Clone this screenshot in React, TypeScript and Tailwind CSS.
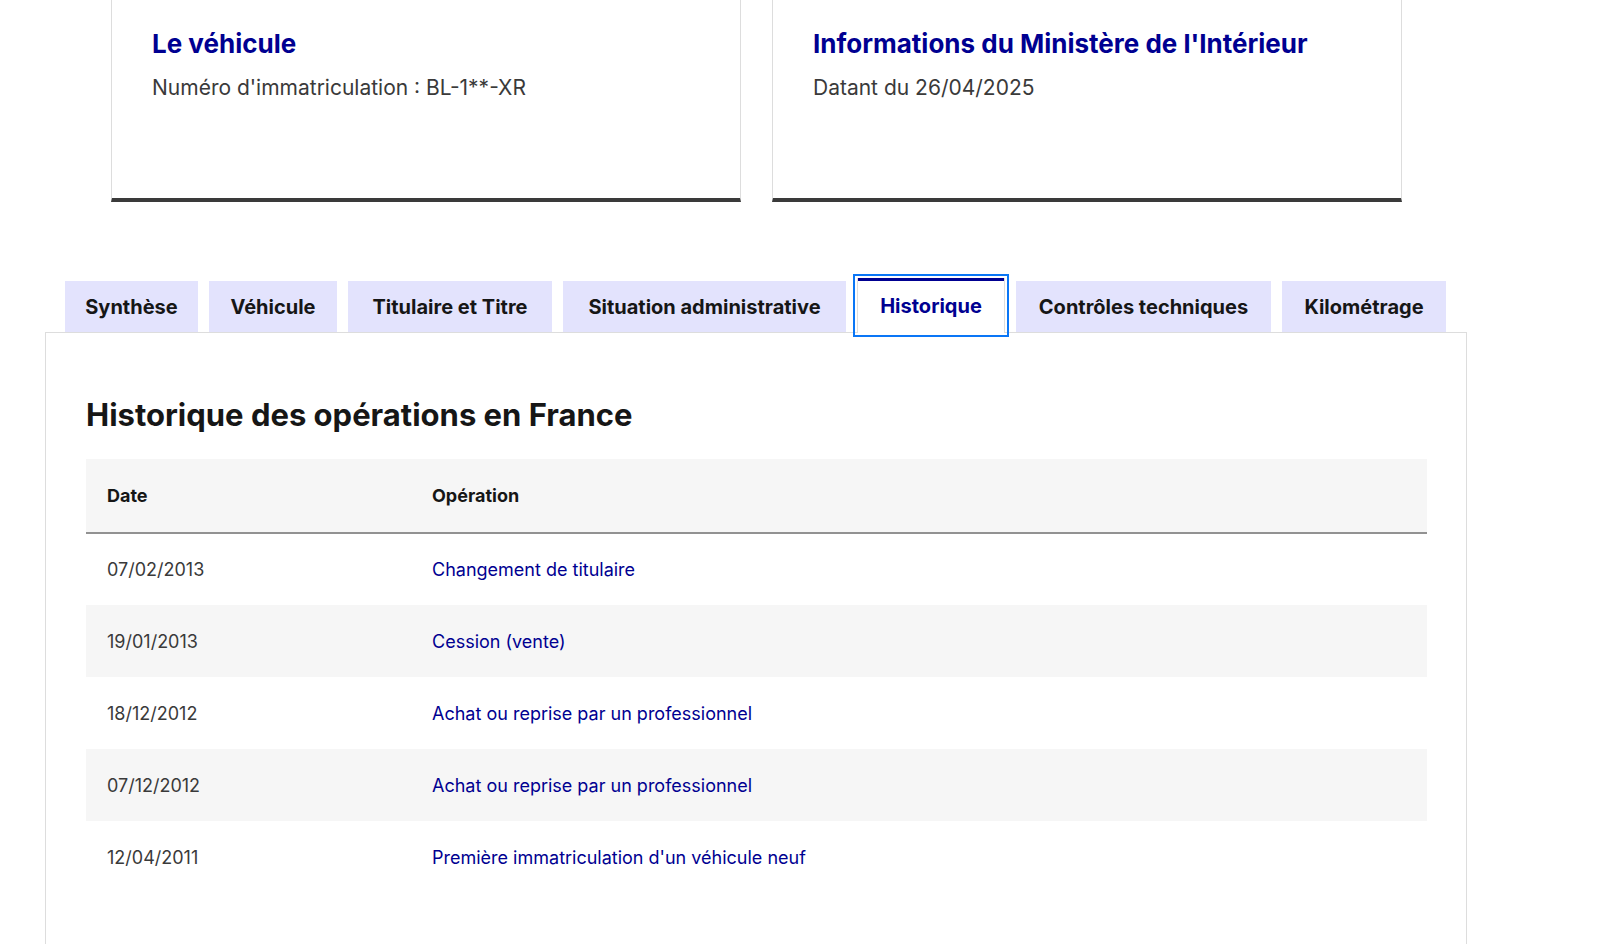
import React from 'react';

const tabs = [
  { label: 'Synthèse', width: 'w-[133px]' },
  { label: 'Véhicule', width: 'w-[128px]' },
  { label: 'Titulaire et Titre', width: 'w-[204px]' },
  { label: 'Situation administrative', width: 'w-[283px]' },
  { label: 'Historique', width: 'w-[148px]' },
  { label: 'Contrôles techniques', width: 'w-[255px]' },
  { label: 'Kilométrage', width: 'w-[164px]' },
];

const operations = [
  { date: '07/02/2013', label: 'Changement de titulaire' },
  { date: '19/01/2013', label: 'Cession (vente)' },
  { date: '18/12/2012', label: 'Achat ou reprise par un professionnel' },
  { date: '07/12/2012', label: 'Achat ou reprise par un professionnel' },
  { date: '12/04/2011', label: "Première immatriculation d'un véhicule neuf" },
];

const Card = ({ title, text }: { title: string; text: string }) => (
  <div className="w-[630px] h-[202px] border-x border-[#dddddd] border-b-4 border-b-[#3a3a3a] pl-[40px] pt-[26px]">
    <h2 className="text-[26px] leading-[36px] font-bold text-[#000091]">{title}</h2>
    <p className="mt-[11px] text-[21px] leading-[30px] text-[#3a3a3a]">{text}</p>
  </div>
);

const App = () => {
  return (
    <div className="min-h-screen bg-white font-['Inter',sans-serif] text-[#161616] overflow-hidden">
      <div className="flex gap-[31px] ml-[111px]">
        <Card title="Le véhicule" text="Numéro d'immatriculation : BL-1**-XR" />
        <Card title="Informations du Ministère de l'Intérieur" text="Datant du 26/04/2025" />
      </div>

      <div className="ml-[45px] w-[1422px] mt-[79px]">
        <div className="flex gap-[11px] pl-[20px] h-[51px] items-end">
          {tabs.map((tab) => {
            const active = tab.label === 'Historique';
            return active ? (
              <button
                key={tab.label}
                className={`${tab.width} relative h-[55px] -mb-[1px] bg-white text-[#000091] text-[20px] font-bold outline-2 outline-[#0a76f6] outline-offset-[2px] border-x border-[#dddddd] shadow-[inset_0_3px_0_0_#000091]`}
              >
                {tab.label}
              </button>
            ) : (
              <button
                key={tab.label}
                className={`${tab.width} h-[51px] bg-[#e3e3fd] text-[20px] font-bold text-[#161616]`}
              >
                {tab.label}
              </button>
            );
          })}
        </div>

        <div className="border border-[#dddddd] min-h-[640px] px-[40px] pt-[62px]">
          <h3 className="text-[31px] leading-[40px] font-bold text-[#161616]">
            Historique des opérations en France
          </h3>
          <table className="mt-[24px] w-[1341px] text-[18px] border-collapse">
            <thead>
              <tr className="bg-[#f6f6f6] border-b-2 border-[#929292] h-[74px]">
                <th className="w-[325px] text-left pl-[21px] font-bold text-[#161616]">Date</th>
                <th className="text-left pl-[21px] font-bold text-[#161616]">Opération</th>
              </tr>
            </thead>
            <tbody>
              {operations.map((op, i) => (
                <tr key={i} className={i % 2 === 1 ? 'bg-[#f6f6f6] h-[72px]' : 'bg-white h-[72px]'}>
                  <td className="pl-[21px] text-[#3a3a3a]">{op.date}</td>
                  <td className="pl-[21px] text-[#000091]">{op.label}</td>
                </tr>
              ))}
            </tbody>
          </table>
        </div>
      </div>
    </div>
  );
};

export default App;
